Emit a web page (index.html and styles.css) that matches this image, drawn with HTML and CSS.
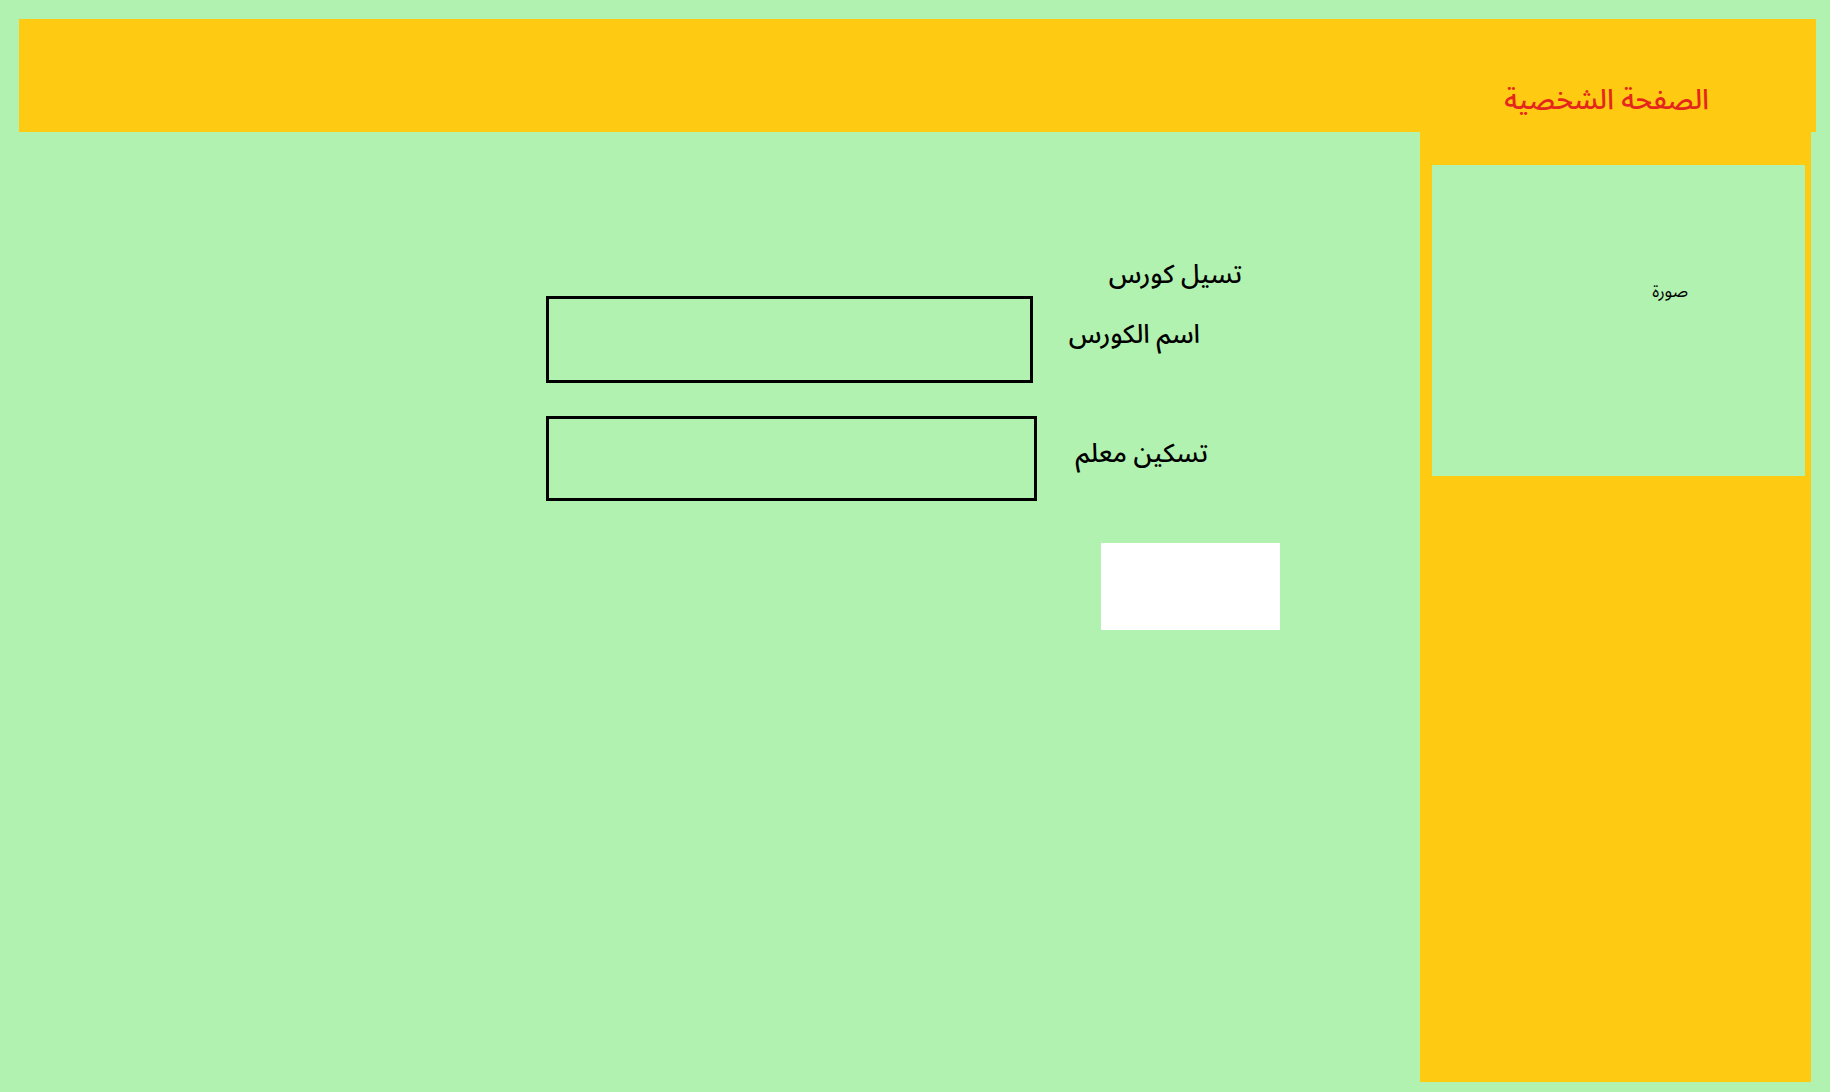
FILE: index.html
```html
<!DOCTYPE html>
<html lang="ar" dir="rtl">
<head>
<meta charset="utf-8">
<title>الصفحة الشخصية</title>
<link rel="stylesheet" href="styles.css">
</head>
<body>
<header class="topbar">
  <h1 class="topbar-title">الصفحة الشخصية</h1>
</header>
<div class="layout">
  <aside class="sidebar">
    <div class="photo">صورة</div>
  </aside>
  <main class="content">
    <h2 class="form-title">تسيل كورس</h2>
    <div class="row row-course">
      <label class="row-label">اسم الكورس</label>
      <div class="field field-course"></div>
    </div>
    <div class="row row-teacher">
      <label class="row-label">تسكين معلم</label>
      <div class="field field-teacher"></div>
    </div>
    <div class="actions">
      <button class="submit" type="button"></button>
    </div>
  </main>
</div>
</body>
</html>
```
FILE: styles.css
```css
html, body {
  margin: 0;
  padding: 0;
}
body {
  background: #b2f2b0;
  width: 1830px;
  height: 1092px;
  overflow: hidden;
  font-family: "Noto Sans Arabic", "DejaVu Sans", "Noto Sans", sans-serif;
  color: #000;
}
.topbar {
  margin: 19px 14px 0 19px;
  height: 113px;
  background: #fecb12;
  box-sizing: border-box;
  padding: 0 107px 0 0;
  display: flex;
  align-items: flex-start;
}
.topbar-title {
  margin: 63px 0 0 0;
  font-size: 28px;
  line-height: 38px;
  font-weight: 500;
  color: #e5261d;
}
.layout {
  display: flex;
  flex-direction: row;
  height: 950px;
}
.sidebar {
  order: 0;
  width: 391px;
  margin-right: 19px;
  background: #fecb12;
  box-sizing: border-box;
  padding: 33px 6px 0 12px;
}
.photo {
  height: 311px;
  background: #b2f2b0;
  box-sizing: border-box;
  padding: 115px 117px 0 0;
  font-size: 17px;
  line-height: 24px;
}
.content {
  flex: 1;
  padding-top: 127px;
}
.form-title {
  margin: 0;
  padding: 0 178px 5px 0;
  font-size: 26px;
  line-height: 32px;
  font-weight: 500;
}
.row {
  display: flex;
  align-items: center;
}
.row-course {
  padding-right: 220px;
}
.row-teacher {
  padding-right: 212px;
  margin-top: 33px;
}
.row-label {
  font-size: 26px;
  line-height: 32px;
  font-weight: 500;
}
.row-course .row-label {
  width: 167px;
  margin-top: -9px;
}
.row-teacher .row-label {
  width: 171px;
  margin-top: -10px;
}
.field {
  border: 3px solid #000;
  box-sizing: border-box;
}
.field-course {
  width: 487px;
  height: 87px;
}
.field-teacher {
  width: 491px;
  height: 85px;
}
.actions {
  padding-right: 140px;
  margin-top: 42px;
  display: flex;
}
.submit {
  width: 179px;
  height: 87px;
  background: #fff;
  border: 0;
  padding: 0;
}
```
